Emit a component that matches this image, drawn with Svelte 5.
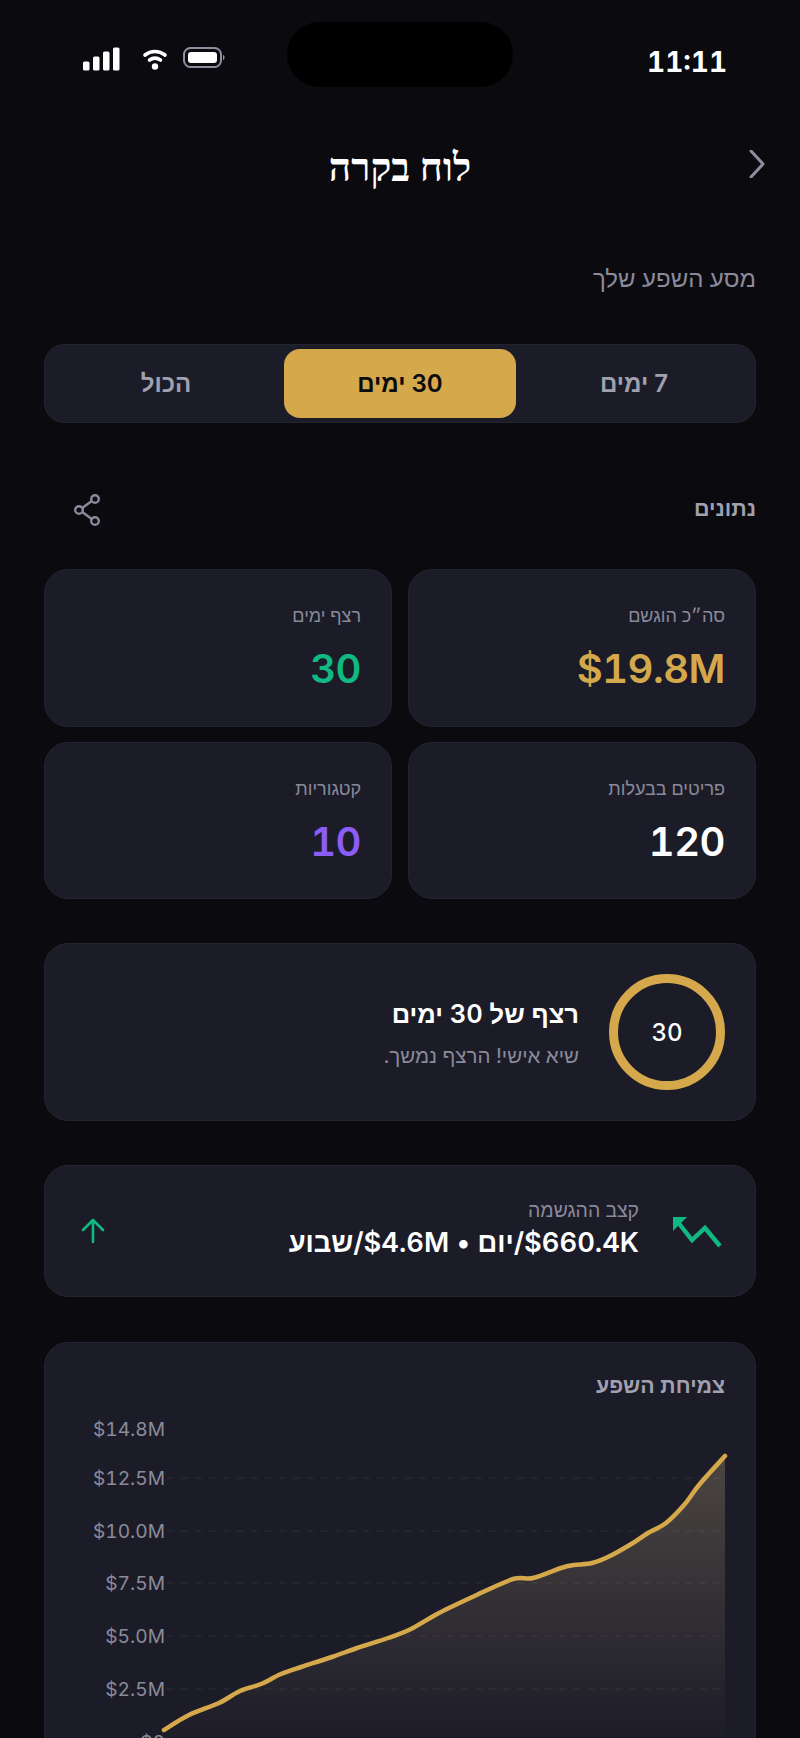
<script>
  const stats = [
    { label: 'סה״כ הוגשם', value: '$19.8M', tone: 'gold' },
    { label: 'רצף ימים', value: '30', tone: 'green' },
    { label: 'פריטים בבעלות', value: '120', tone: 'white' },
    { label: 'קטגוריות', value: '10', tone: 'purple' }
  ];

  // chart box starts at card inner left (75) and 1410 from the top of the page
  const pts = [
    [164, 1730], [189, 1715], [219, 1703], [240, 1691], [261, 1684], [281, 1674],
    [301, 1667], [332, 1657], [357, 1648], [388, 1638], [411, 1629], [439, 1613],
    [474.5, 1596], [513, 1579], [533, 1578], [561, 1568], [574, 1565], [592, 1563],
    [610, 1556], [633, 1543], [648, 1533], [666, 1523], [684, 1505], [699, 1485], [725, 1456]
  ].map(([x, y]) => [x - 75, y - 1410]);

  const ticks = [
    { label: '$14.8M', y: 19, grid: false },
    { label: '$12.5M', y: 68, grid: true },
    { label: '$10.0M', y: 121, grid: true },
    { label: '$7.5M', y: 173, grid: true },
    { label: '$5.0M', y: 226, grid: true },
    { label: '$2.5M', y: 279, grid: true },
    { label: '$0', y: 332, grid: false }
  ];

  function smooth(p) {
    let d = `M${p[0][0]} ${p[0][1]}`;
    for (let i = 0; i < p.length - 1; i++) {
      const a = p[Math.max(i - 1, 0)], b = p[i], c = p[i + 1], e = p[Math.min(i + 2, p.length - 1)];
      const c1 = [b[0] + (c[0] - a[0]) / 6, b[1] + (c[1] - a[1]) / 6];
      const c2 = [c[0] - (e[0] - b[0]) / 6, c[1] - (e[1] - b[1]) / 6];
      d += `C${c1[0].toFixed(1)} ${c1[1].toFixed(1)} ${c2[0].toFixed(1)} ${c2[1].toFixed(1)} ${c[0]} ${c[1]}`;
    }
    return d;
  }

  const linePath = smooth(pts);
  const areaPath = `${linePath}L650 332L89 332Z`;
</script>

<div class="screen" dir="rtl">
  <div class="status">
    <span class="time">11:11</span>
    <div class="island"></div>
    <div class="status-icons">
      <svg width="142" height="24" viewBox="0 0 142 24">
        <g fill="#fff">
          <rect x="0" y="14.5" width="6.5" height="9" rx="1.5" />
          <rect x="10" y="9.5" width="6.5" height="14" rx="1.5" />
          <rect x="20" y="4.5" width="6.5" height="19" rx="1.5" />
          <rect x="30" y="0.5" width="6.5" height="23" rx="1.5" />
        </g>
        <g fill="none" stroke="#fff" stroke-width="3.6" stroke-linecap="round">
          <path d="M62 8a16 16 0 0 1 20 0" />
          <path d="M66.5 13a9.5 9.5 0 0 1 11 0" />
        </g>
        <circle cx="72" cy="19.5" r="3.2" fill="#fff" />
        <rect x="101" y="1" width="37" height="19" rx="6.5" fill="none" stroke="#8e8e9e" stroke-width="2" />
        <rect x="105" y="5" width="29" height="11" rx="3" fill="#fff" />
        <path d="M140 8c2 0 2 5 0 5z" fill="#8e8e9e" />
      </svg>
    </div>
  </div>

  <header class="top">
    <svg class="back" width="16" height="28" viewBox="0 0 16 28">
      <path d="M2 1l12 13L2 27" fill="none" stroke="#8e8e9e" stroke-width="3" stroke-linecap="round" stroke-linejoin="round" />
    </svg>
    <h1>לוח בקרה</h1>
  </header>

  <main>
    <p class="subtitle">מסע השפע שלך</p>

    <div class="segments">
      <button>7 ימים</button>
      <button class="active">30 ימים</button>
      <button>הכול</button>
    </div>

    <div class="section-row">
      <span class="section-title">נתונים</span>
      <svg width="30" height="32" viewBox="0 0 30 32" fill="none" stroke="#8a8a9a" stroke-width="2.4">
        <circle cx="23" cy="5" r="3.8" />
        <circle cx="7" cy="16" r="3.8" />
        <circle cx="23" cy="27" r="3.8" />
        <path d="M10.2 14l9.6-7M10.2 18l9.6 7" />
      </svg>
    </div>

    <div class="stats">
      {#each stats as s}
        <div class="card stat">
          <span class="stat-label">{s.label}</span>
          <span class="stat-value {s.tone}">{s.value}</span>
        </div>
      {/each}
    </div>

    <div class="card streak">
      <div class="ring">30</div>
      <div class="streak-text">
        <div class="streak-title">רצף של 30 ימים</div>
        <div class="streak-sub">שיא אישי! הרצף נמשך.</div>
      </div>
    </div>

    <div class="card rate">
      <svg class="trend" width="50" height="32" viewBox="0 0 50 32" fill="none" stroke="#10b981" stroke-width="4.4">
        <path d="M48 30L33 12 20 24 5 5" />
        <path d="M1 1h14L1 15z" fill="#10b981" stroke="none" />
      </svg>
      <div class="rate-text">
        <div class="rate-label">קצב ההגשמה</div>
        <div class="rate-value">$660.4K/יום • $4.6M/שבוע</div>
      </div>
      <svg class="up" width="26" height="26" viewBox="0 0 26 26" fill="none" stroke="#10b981" stroke-width="2.6" stroke-linecap="round" stroke-linejoin="round">
        <path d="M13 24V2M3 12L13 2l10 10" />
      </svg>
    </div>

    <div class="card chart">
      <div class="chart-title">צמיחת השפע</div>
      <svg class="plot" width="650" height="360" viewBox="0 0 650 360">
        <defs>
          <linearGradient id="fade" gradientUnits="userSpaceOnUse" x1="0" y1="46" x2="0" y2="332">
            <stop offset="0" stop-color="#d4b98a" stop-opacity="0.26" />
            <stop offset="1" stop-color="#d4b98a" stop-opacity="0" />
          </linearGradient>
        </defs>
        {#each ticks as t}
          {#if t.grid}
            <line x1="92" x2="650" y1={t.y} y2={t.y} stroke="#272733" stroke-width="1.5" stroke-dasharray="7 7" />
          {/if}
          <text x="90" y={t.y + 7} text-anchor="end" class="tick">{t.label}</text>
        {/each}
        <path d={areaPath} fill="url(#fade)" />
        <path d={linePath} fill="none" stroke="#d4a84b" stroke-width="4.5" stroke-linecap="round" stroke-linejoin="round" />
      </svg>
    </div>
  </main>
</div>

<style>
  :global(body) {
    background: #0a0a0f;
  }

  .screen {
    height: 1738px;
    overflow: hidden;
    background: #0a0a0f;
    color: #fff;
    font-family: Inter, "Liberation Sans", sans-serif;
    font-variant-numeric: tabular-nums;
  }

  .status {
    display: grid;
    grid-template-columns: 1fr 226px 1fr;
    align-items: center;
    height: 65px;
    padding-top: 22px;
  }

  .time {
    padding-right: 73px;
    font-size: 28px;
    font-weight: 700;
    line-height: 1;
    direction: ltr;
    text-align: right;
    margin-top: 14px;
  }

  .island {
    height: 65px;
    background: #000;
    border-radius: 33px;
  }

  .status-icons {
    display: flex;
    justify-content: flex-end;
    padding-left: 83px;
    margin-top: 8px;
  }

  .status-icons svg {
    display: block;
  }

  .top {
    position: relative;
    display: flex;
    justify-content: center;
    align-items: center;
    height: 70px;
    margin-top: 47px;
  }

  .back {
    position: absolute;
    right: 35px;
    top: 16px;
  }

  h1 {
    margin: 0 0 3px;
    font-family: "Liberation Serif", serif;
    font-size: 39px;
    font-weight: 700;
    line-height: 67px;
  }

  main {
    padding: 0 44px;
  }

  .subtitle {
    margin: 0;
    padding-top: 55px;
    height: 40px;
    line-height: 40px;
    font-size: 24px;
    color: #8a8a9a;
  }

  .segments {
    display: grid;
    grid-template-columns: repeat(3, 1fr);
    gap: 2px;
    margin-top: 45px;
    padding: 4px 5px;
    height: 79px;
    box-sizing: border-box;
    background: #1c1c28;
    border: 1px solid #24242f;
    border-radius: 20px;
  }

  .segments button {
    border: 0;
    background: none;
    border-radius: 16px;
    font: 600 24px Inter, "Liberation Sans", sans-serif;
    color: #a0a0b0;
  }

  .segments .active {
    background: #d4a84b;
    color: #0a0a0f;
  }

  .section-row {
    display: flex;
    justify-content: space-between;
    align-items: center;
    height: 32px;
    margin: 71px 0 43px;
    padding-left: 28px;
  }

  .section-title {
    margin-bottom: 4px;
    font-size: 21.5px;
    font-weight: 600;
    color: #a0a0b0;
  }

  .card {
    background: #1c1c28;
    border: 1px solid #24242f;
    border-radius: 24px;
    box-sizing: border-box;
  }

  .stats {
    display: grid;
    grid-template-columns: 1fr 1fr;
    gap: 15px 16px;
  }

  .stat {
    display: flex;
    flex-direction: column;
    height: 157.5px;
    padding: 34px 30px 0;
  }

  .stat-label {
    font-size: 18px;
    line-height: 24px;
    color: #8a8a9a;
  }

  .stat-value {
    margin-top: 15px;
    font-size: 40px;
    font-weight: 600;
    letter-spacing: -0.5px;
    line-height: 52px;
    direction: ltr;
    text-align: right;
  }

  .gold { color: #d4a84b; }
  .green { color: #10b981; }
  .white { color: #fff; }
  .purple { color: #8b5cf6; }

  .streak {
    display: flex;
    align-items: center;
    gap: 30px;
    height: 178px;
    margin-top: 44px;
    padding: 0 30px;
  }

  .ring {
    display: flex;
    align-items: center;
    justify-content: center;
    width: 116px;
    height: 116px;
    box-sizing: border-box;
    border: 9px solid #d4a84b;
    border-radius: 50%;
    font-size: 24px;
    font-weight: 500;
  }

  .streak-text {
    padding-top: 3px;
  }

  .streak-title {
    font-size: 25.5px;
    font-weight: 600;
    line-height: 32px;
  }

  .streak-sub {
    margin-top: 13px;
    font-size: 20.5px;
    line-height: 26px;
    color: #8a8a9a;
  }

  .rate {
    display: flex;
    align-items: center;
    height: 132px;
    margin-top: 44px;
    padding: 0 33px 0 35px;
  }

  .trend {
    flex: none;
    margin-top: 2px;
  }

  .rate-text {
    flex: 1;
    margin-right: 33px;
    margin-bottom: 5px;
  }

  .rate-label {
    font-size: 19.4px;
    line-height: 24px;
    color: #8a8a9a;
  }

  .rate-value {
    margin-top: 4px;
    font-size: 27.3px;
    font-weight: 600;
    line-height: 34px;
  }

  .up {
    flex: none;
  }

  .chart {
    height: 480px;
    margin-top: 45px;
    padding: 30px 30px 0;
  }

  .chart-title {
    font-size: 21.3px;
    font-weight: 600;
    line-height: 24px;
    color: #a0a0b0;
  }

  .plot {
    display: block;
    margin-top: 13px;
    overflow: visible;
    direction: ltr;
  }

  .tick {
    fill: #8a8a9a;
    font-size: 19.2px;
  }
</style>
